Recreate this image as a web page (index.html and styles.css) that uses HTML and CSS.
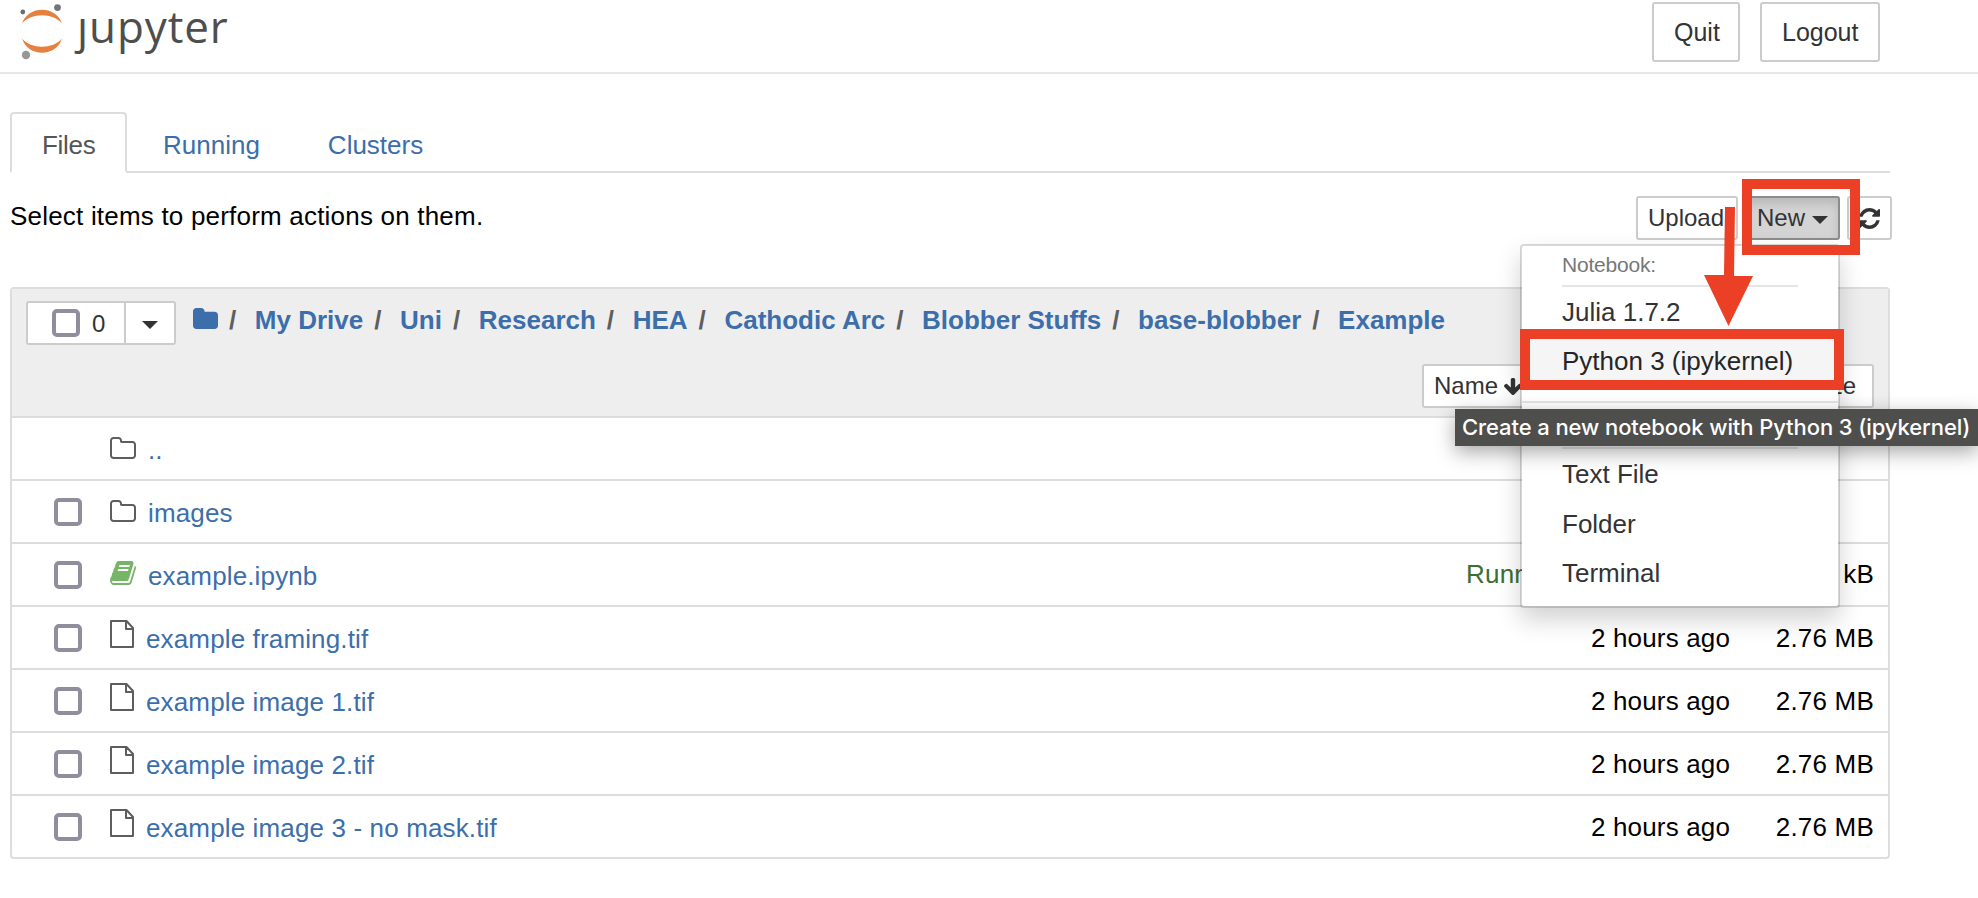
FILE: index.html
```html
<!DOCTYPE html>
<html lang="en">
<head>
<meta charset="utf-8">
<title>Home Page - Select or create a notebook</title>
<link rel="stylesheet" href="styles.css">
</head>
<body>
<svg class="sprite" width="0" height="0">
  <symbol id="folder-o" viewBox="64 128 1664 1408" preserveAspectRatio="none"><path d="M1600 1312v-704q0-40-28-68t-68-28h-704q-40 0-68-28t-28-68v-64q0-40-28-68t-68-28h-320q-40 0-68 28t-28 68v960q0 40 28 68t68 28h1216q40 0 68-28t28-68zm128-704v704q0 92-66 158t-158 66h-1216q-92 0-158-66t-66-158v-960q0-92 66-158t158-66h320q92 0 158 66t66 158v32h672q92 0 158 66t66 158z"/></symbol>
  <symbol id="folder" viewBox="64 128 1664 1408" preserveAspectRatio="none"><path d="M1728 608v704q0 92-66 158t-158 66h-1216q-92 0-158-66t-66-158v-960q0-92 66-158t158-66h320q92 0 158 66t66 158v32h672q92 0 158 66t66 158z"/></symbol>
  <symbol id="book" viewBox="64 128 1664 1536" preserveAspectRatio="none"><path d="M1703 478q40 57 18 129l-275 906q-19 64-76.5 107.5t-122.5 43.5h-923q-77 0-148.5-53.5t-99.5-131.5q-24-67-2-127 0-4 3-27t4-37q1-8-3-21.5t-3-19.5q2-11 8-21t16.5-23.5 16.5-23.5q23-38 45-91.5t30-91.5q3-10 .5-30t-.5-28q3-11 17-28t17-23q21-36 42-92t25-90q1-9-2.5-32t.5-28q4-13 22-30.5t22-22.5q19-26 42.5-84.5t27.5-96.5q1-8-3-25.5t-2-26.5q2-8 9-18t18-23 17-21q8-12 16.5-30.5t15-35 16-36 19.5-32 26.5-23.5 36-11.5 47.5 5.5l-1 3q38-9 51-9h761q74 0 114 56t18 130l-274 906q-36 119-71.5 153.5t-128.5 34.5h-869q-27 0-38 15-11 16-1 43 24 70 144 70h923q29 0 56-15.5t35-41.5l300-987q7-22 5-57 38 15 59 43zm-1064 2q-4 13 2 22.5t20 9.5h608q13 0 25.5-9.5t16.5-22.5l21-64q4-13-2-22.5t-20-9.5h-608q-13 0-25.5 9.5t-16.5 22.5zm-83 256q-4 13 2 22.5t20 9.5h608q13 0 25.5-9.5t16.5-22.5l21-64q4-13-2-22.5t-20-9.5h-608q-13 0-25.5 9.5t-16.5 22.5z"/></symbol>
  <symbol id="file-o" viewBox="0 0 24 28"><path d="M1 1H16.500L23 8V27H1ZM16 1V9H23" fill="none" stroke="currentColor" stroke-width="2" stroke-linejoin="round"/></symbol>
</svg>

<header class="header">
  <a class="logo">
    <svg class="planet" viewBox="0 0 44 58" width="44" height="58">
      <path d="M2 21.500C8 3 36 3 42 21.500C33 10.500 11 10.500 2 21.500Z" fill="#e5813d"/>
      <path d="M2 36.500C8 55.500 36 55.500 42 36.500C33 47.500 11 47.500 2 36.500Z" fill="#e5813d"/>
      <circle cx="2.800" cy="10" r="2.400" fill="#6e6e6e"/>
      <circle cx="37.500" cy="5.600" r="3.400" fill="#767677"/>
      <circle cx="6" cy="53" r="4.200" fill="#989798"/>
    </svg>
    <span class="wordmark"><span class="stem">j</span>upyter</span>
  </a>
  <div class="session">
    <button class="btn big quit">Quit</button>
    <button class="btn big logout">Logout</button>
  </div>
</header>

<main class="main">
  <nav class="tabs">
    <a class="tab active">Files</a>
    <a class="tab running">Running</a>
    <a class="tab clusters">Clusters</a>
  </nav>

  <div class="toolbar">
    <span class="hint">Select items to perform actions on them.</span>
    <div class="actions">
      <button class="btn upload">Upload</button>
      <button class="btn open">New<i class="caret"></i></button>
      <button class="btn refresh"><svg width="21" height="21" viewBox="0 0 1536 1536" fill="currentColor"><path d="M1511 928q0 5 -1 7q-64 268 -268 434.500t-478 166.500q-146 0 -282.500 -55t-243.500 -157l-129 129q-19 19 -45 19t-45 -19t-19 -45v-448q0 -26 19 -45t45 -19h448q26 0 45 19t19 45t-19 45l-137 137q71 66 161 102t187 36q134 0 250 -65t186 -179q11 -17 53 -117q8 -23 30 -23h192q13 0 22.500 9.500t9.500 22.500zM1536 128v448q0 26 -19 45t-45 19h-448q-26 0 -45 -19t-19 -45t19 -45l138 -138q-148 -137 -349 -137q-134 0 -250 65t-186 179q-11 17 -53 117q-8 23 -30 23h-199q-13 0 -22.500 -9.500t-9.500 -22.500v-7q65 -268 270 -434.500t480 -166.500q146 0 284 55.500t245 156.500l130 -129q19 -19 45 -19t45 19t19 45z"/></svg></button>
    </div>
  </div>

  <section class="list">
    <div class="list-head">
      <div class="path">
        <div class="select">
          <div class="select-all"><i class="check"></i>0</div>
          <div class="select-menu"><i class="caret"></i></div>
        </div>
        <ul class="crumbs">
          <li><svg class="home" width="25" height="21"><use href="#folder"/></svg></li>
          <li><a>My Drive</a></li>
          <li><a>Uni</a></li>
          <li><a>Research</a></li>
          <li><a>HEA</a></li>
          <li><a>Cathodic Arc</a></li>
          <li><a>Blobber Stuffs</a></li>
          <li><a>base-blobber</a></li>
          <li><a>Example</a></li>
        </ul>
      </div>
      <div class="sort">
        <button class="btn name">Name<svg width="20" height="19" viewBox="117 128 1558 1483" fill="currentColor"><path d="M1675 832q0 53-37 90l-651 652q-39 37-91 37-53 0-90-37l-651-652q-38-36-38-90 0-53 38-91l74-75q39-37 91-37 53 0 90 37l294 294v-704q0-52 38-90t90-38h128q52 0 90 38t38 90v704l294-294q37-37 90-37 52 0 91 37l75 75q37 39 37 91z"/></svg></button>
        <button class="btn size">File size</button>
      </div>
    </div>

    <div class="row"><span class="box"></span><svg class="icon" width="26" height="22"><use href="#folder-o"/></svg><a class="item">..</a></div>
    <div class="row"><span class="box"><i class="check"></i></span><svg class="icon" width="26" height="22"><use href="#folder-o"/></svg><a class="item">images</a></div>
    <div class="row"><span class="box"><i class="check"></i></span><svg class="icon book" width="26" height="24"><use href="#book"/></svg><a class="item">example.ipynb</a><span class="state">Running</span><span class="bytes">kB</span></div>
    <div class="row file"><span class="box"><i class="check"></i></span><svg class="icon" width="24" height="28"><use href="#file-o"/></svg><a class="item">example framing.tif</a><span class="time">2 hours ago</span><span class="bytes">2.76 MB</span></div>
    <div class="row file"><span class="box"><i class="check"></i></span><svg class="icon" width="24" height="28"><use href="#file-o"/></svg><a class="item">example image 1.tif</a><span class="time">2 hours ago</span><span class="bytes">2.76 MB</span></div>
    <div class="row file"><span class="box"><i class="check"></i></span><svg class="icon" width="24" height="28"><use href="#file-o"/></svg><a class="item">example image 2.tif</a><span class="time">2 hours ago</span><span class="bytes">2.76 MB</span></div>
    <div class="row file"><span class="box"><i class="check"></i></span><svg class="icon" width="24" height="28"><use href="#file-o"/></svg><a class="item">example image 3 - no mask.tif</a><span class="time">2 hours ago</span><span class="bytes">2.76 MB</span></div>
  </section>
</main>

<div class="menu">
  <div class="menu-title">Notebook:</div>
  <a class="menu-item">Julia 1.7.2</a>
  <a class="menu-item hover">Python 3 (ipykernel)</a>
  <div class="menu-divider"></div>
  <div class="menu-gap"></div>
  <a class="menu-item text-file">Text File</a>
  <a class="menu-item">Folder</a>
  <a class="menu-item">Terminal</a>
</div>

<div class="mark mark-new"></div>
<div class="mark mark-python"></div>
<svg class="arrow" width="50" height="120" viewBox="0 0 50 120"><path d="M21 0H31L30 69H49L24.500 119L0 68H20Z" fill="#eb4025"/></svg>
<div class="tooltip">Create a new notebook with Python 3 (ipykernel)</div>
</body>
</html>
```
FILE: styles.css
```css
* { box-sizing: border-box; }

body {
  position: relative;
  width: 1978px;
  height: 898px;
  margin: 0;
  overflow: hidden;
  background: #fff;
  color: #000;
  font: 26px/37px "Liberation Sans", Arial, sans-serif;
}

.sprite { position: absolute; }

/* Header */
.header {
  display: flex;
  justify-content: space-between;
  align-items: flex-start;
  height: 74px;
  padding: 2px 98px 0 20px;
  border-bottom: 2px solid #e7e7e7;
}
.logo { display: flex; }
.planet { display: block; }
.wordmark {
  margin: -2px 0 0 13px;
  color: #4e4e4e;
  font: 44px/52px "Open Sans", "Noto Sans", sans-serif;
  letter-spacing: 0.9px;
}
.stem { display: inline-block; clip-path: inset(18px -20px -10px -20px); }
.session { display: flex; gap: 20px; }

.btn {
  display: flex;
  align-items: center;
  height: 44px;
  margin: 0;
  padding: 0 10px;
  border: 2px solid #ccc;
  border-radius: 3px;
  background: #fff;
  color: #333;
  font: 24px/36px "Liberation Sans", Arial, sans-serif;
  white-space: nowrap;
}
.btn.big { height: 60px; padding: 0 20px; font-size: 25px; line-height: 36px; }
.quit { width: 88px; }
.logout { width: 120px; }

.caret {
  border: 8px solid transparent;
  border-top-color: #333;
  border-bottom: 0;
}

/* Tabs */
.main { width: 1880px; margin-left: 10px; padding-top: 38px; }
.tabs {
  display: flex;
  gap: 4px;
  height: 61px;
  border-bottom: 2px solid #ddd;
}
.tab {
  height: 61px;
  padding: 13px 30px 0;
  border: 2px solid transparent;
  border-radius: 4px 4px 0 0;
  color: #3c6eab;
}
.tab.active {
  width: 117px;
  border-color: #ddd;
  border-bottom-color: #fff;
  background: #fff;
  color: #555;
  letter-spacing: -0.3px;
}

/* Toolbar */
.toolbar {
  display: flex;
  justify-content: space-between;
  height: 114px;
  padding-top: 23px;
}
.hint { padding-top: 2px; letter-spacing: 0.2px; }
.actions { display: flex; margin-right: -2px; }
.upload { width: 102px; }
.open {
  width: 96px;
  padding-left: 11px;
  margin-left: 6px;
  border-color: #8c8c8c;
  background: #d4d4d4;
  box-shadow: inset 0 6px 10px rgba(0, 0, 0, .125);
}
.open .caret { margin-left: 7px; margin-top: 4px; }
.refresh { width: 45px; margin-left: 7px; }

/* File list */
.list {
  width: 1880px;
  border: 2px solid #ddd;
  border-radius: 4px;
}
.list-head { height: 127px; background: #eee; }
.path { display: flex; padding: 12px 0 0 14px; }
.select {
  display: flex;
  width: 150px;
  height: 44px;
  border: 2px solid #ccc;
  border-radius: 3px;
  background: #fff;
  color: #333;
  font-size: 24px;
}
.select-all {
  display: flex;
  align-items: center;
  gap: 12px;
  width: 98px;
  padding-left: 24px;
  border-right: 2px solid #ccc;
}
.select-menu { display: flex; flex: 1; align-items: center; justify-content: center; padding-top: 4px; }
.check {
  display: block;
  width: 28px;
  height: 28px;
  border: 4px solid #8f8e9d;
  border-radius: 5px;
  background: #fff;
}
.crumbs {
  display: flex;
  margin: 0 0 0 17px;
  padding: 1px 0 0;
  list-style: none;
  font-weight: bold;
}
.crumbs li { display: flex; }
.crumbs li + li::before {
  content: "/";
  padding: 0 18.6px 0 11px;
  color: #5e5e5e;
}
.crumbs a { color: #3c6eab; }
.home { margin-top: 6px; fill: #3c6eab; }
.sort {
  display: flex;
  justify-content: flex-end;
  padding: 19px 14px 0 0;
}
.name { width: 112px; margin-right: 226px; gap: 6px; }
.size { width: 114px; justify-content: flex-end; padding-right: 16px; }

.row {
  display: flex;
  align-items: flex-start;
  height: 63px;
  padding: 14px 14px 0 42px;
  border-top: 2px solid #ddd;
}
.box { width: 56px; padding-top: 3px; }
.icon { flex: none; margin-top: 5px; color: #5e5e5e; fill: #5e5e5e; }
.icon.book { margin-top: 3px; fill: #74b566; }
.item { margin-left: 12px; color: #3c6eab; letter-spacing: 0.14px; }
.file .icon { margin-top: -1px; }
.time, .state { margin: -2px 0 0 auto; letter-spacing: 0.15px; }
.state { color: #3b6e33; }
.bytes { width: 144px; margin-top: -2px; text-align: right; letter-spacing: 0.2px; }
.state + .bytes { width: 310px; }
.file .time, .file .bytes { margin-top: -1px; }

/* New menu */
.menu {
  position: absolute;
  left: 1520px;
  top: 244px;
  width: 320px;
  height: 364px;
  padding-top: 4px;
  border: 2px solid rgba(0, 0, 0, .15);
  border-radius: 4px;
  background: #fff;
  background-clip: padding-box;
  box-shadow: 0 12px 24px rgba(0, 0, 0, .175);
}
.menu-title {
  height: 37px;
  margin: 0 40px;
  border-bottom: 2px solid #e5e5e5;
  color: #777;
  font-size: 21px;
  line-height: 30px;
  letter-spacing: -0.2px;
}
.menu-item { display: block; height: 49px; padding: 7px 40px 0; color: #333; }
.menu-item.hover { background: #f5f5f5; color: #262626; }
.menu-divider { height: 2px; margin-top: 16px; background: #e5e5e5; }
.menu-gap { height: 46px; margin: 0 40px; border-bottom: 2px solid #e5e5e5; }
.menu-item.text-file { height: 50px; }

/* Annotations */
.mark { position: absolute; border: 10px solid #eb4025; }
.mark-new { left: 1742px; top: 179px; width: 118px; height: 76px; }
.mark-python { left: 1520px; top: 329px; width: 324px; height: 61px; }
.arrow { position: absolute; left: 1704px; top: 207px; }

.tooltip {
  position: absolute;
  left: 1455px;
  top: 409px;
  width: 523px;
  height: 37px;
  padding-left: 7px;
  background: #4e4e4c;
  box-shadow: 0 6px 20px rgba(0, 0, 0, .35);
  color: #fff;
  font: 500 22px/37px Inter, sans-serif;
  letter-spacing: -0.09px;
  white-space: nowrap;
}
```
